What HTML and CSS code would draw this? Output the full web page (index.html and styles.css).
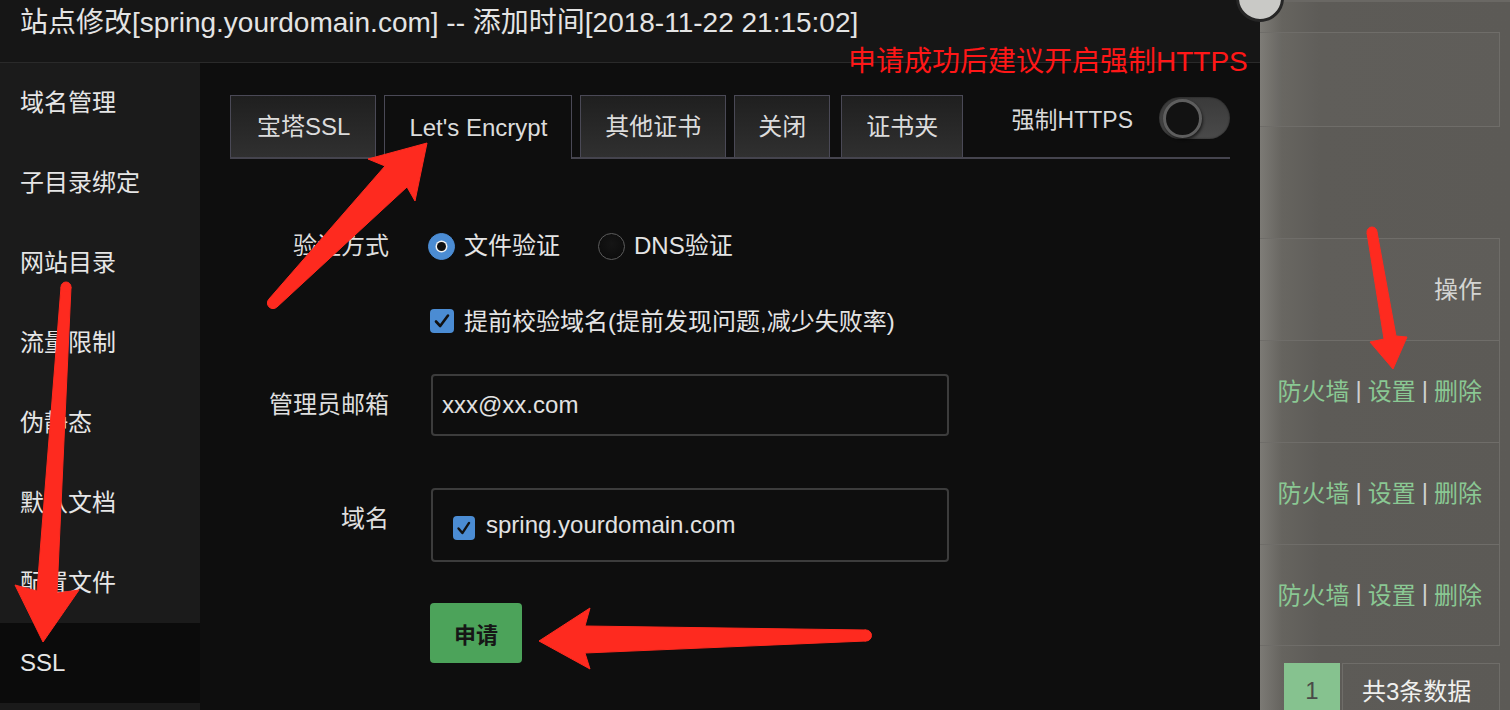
FILE: index.html
```html
<!DOCTYPE html>
<html lang="zh-CN">
<head>
<meta charset="utf-8">
<title>站点修改</title>
<link rel="stylesheet" href="styles.css">
</head>
<body>
<div class="page">
  <div class="dialog">
    <div class="titlebar">站点修改[spring.yourdomain.com] -- 添加时间[2018-11-22 21:15:02]</div>
    <div class="dialog-body">
      <div class="menu">
        <div class="menu-item">域名管理</div>
        <div class="menu-item">子目录绑定</div>
        <div class="menu-item">网站目录</div>
        <div class="menu-item">流量限制</div>
        <div class="menu-item">伪静态</div>
        <div class="menu-item">默认文档</div>
        <div class="menu-item">配置文件</div>
        <div class="menu-item active">SSL</div>
        <div class="menu-fill"></div>
      </div>
      <div class="content">
        <div class="tabbar">
          <div class="tab tab-first">宝塔SSL</div>
          <div class="tab active">Let's Encrypt</div>
          <div class="tab">其他证书</div>
          <div class="tab tab-narrow">关闭</div>
          <div class="tab">证书夹</div>
          <div class="force">
            <span class="force-label">强制HTTPS</span>
            <span class="switch"></span>
          </div>
        </div>
        <div class="form">
          <div class="row row-radio">
            <div class="label">验证方式</div>
            <label class="radio-opt"><span class="radio checked"></span>文件验证</label>
            <label class="radio-opt"><span class="radio"></span>DNS验证</label>
          </div>
          <div class="row row-check">
            <div class="label"></div>
            <label class="check-opt"><span class="checkbox"><svg viewBox="0 0 24 24" width="24" height="24"><path d="M6 12.5 L10.2 17 L18 6.5" fill="none" stroke="#111" stroke-width="2.6" stroke-linecap="round" stroke-linejoin="round"/></svg></span>提前校验域名(提前发现问题,减少失败率)</label>
          </div>
          <div class="row row-input row-email">
            <div class="label">管理员邮箱</div>
            <div class="input">xxx@xx.com</div>
          </div>
          <div class="row row-input row-domain">
            <div class="label">域名</div>
            <div class="input input-domain"><span class="checkbox small"><svg viewBox="0 0 24 24" width="22" height="22"><path d="M6 12.5 L10.2 17.5 L17.5 6.5" fill="none" stroke="#111" stroke-width="2.6" stroke-linecap="round" stroke-linejoin="round"/></svg></span>spring.yourdomain.com</div>
          </div>
          <div class="row row-btn">
            <div class="label"></div>
            <button class="btn">申请</button>
          </div>
        </div>
        <div class="annot">申请成功后建议开启强制HTTPS</div>
      </div>
    </div>
  </div>
  <div class="side">
    <div class="box box-top"></div>
    <div class="table">
      <div class="trow head">操作</div>
      <div class="trow ops"><span class="op">防火墙</span><span class="sep">|</span><span class="op">设置</span><span class="sep">|</span><span class="op">删除</span></div>
      <div class="trow ops"><span class="op">防火墙</span><span class="sep">|</span><span class="op">设置</span><span class="sep">|</span><span class="op">删除</span></div>
      <div class="trow ops last"><span class="op">防火墙</span><span class="sep">|</span><span class="op">设置</span><span class="sep">|</span><span class="op">删除</span></div>
    </div>
    <div class="pager">
      <span class="pg-cur">1</span>
      <span class="pg-total">共3条数据</span>
    </div>
  </div>
</div>
<div class="close-btn"></div>
<svg class="arrows" width="1510" height="710" viewBox="0 0 1510 710">
  <g fill="#fe2a1f" stroke="#fe2a1f" stroke-width="1" stroke-linejoin="round">
    <path d="M269 299 L385 166 L368 159 L427 143 L415 201 L407 187 L277 307 Z"/>
    <circle cx="273" cy="303" r="5.6"/>
    <path d="M61 287 L37 591 L15 585 L43 642 L79 590 L57 593 L71 287 Z"/>
    <circle cx="66" cy="287" r="5"/>
    <path d="M1367 233 L1384 339 L1370 342 L1393 369 L1407 337 L1396 336 L1377 232 Z"/>
    <circle cx="1372" cy="232" r="5"/>
    <path d="M539 641 L590 608 L585 626 L866 630 L866 641 L585 653 L590 669 Z"/>
    <circle cx="866" cy="635.5" r="5.5"/>
  </g>
</svg>
</body>
</html>
```

FILE: styles.css
```css
* { box-sizing: border-box; }

body {
  margin: 0;
  width: 1510px;
  height: 710px;
  overflow: hidden;
  position: relative;
  background: #0e0e0e;
  color: #e2e2e2;
  font-family: "Liberation Sans", "Noto Sans CJK SC", sans-serif;
}

.page {
  display: flex;
  height: 710px;
}

.dialog {
  width: 1260px;
  display: flex;
  flex-direction: column;
  background: #0e0e0e;
}

.titlebar {
  height: 63px;
  flex: none;
  background: #161616;
  border-bottom: 1px solid #2a2a2a;
  padding-left: 20px;
  font-size: 28px;
  line-height: 46px;
  color: #e4e4e4;
  white-space: nowrap;
}

.dialog-body {
  flex: 1;
  display: flex;
  min-height: 0;
}

.menu {
  width: 200px;
  flex: none;
  display: flex;
  flex-direction: column;
  background: #1b1b1b;
}

.menu-item {
  height: 80px;
  flex: none;
  line-height: 80px;
  padding-left: 20px;
  font-size: 24px;
  color: #e6e6e6;
}

.menu-item.active {
  background: #0b0b0b;
}

.menu-fill {
  flex: 1;
  background: #1a1a1a;
}

.content {
  flex: 1;
  position: relative;
  padding: 32px 30px 0 30px;
}

/* tabs */
.tabbar {
  display: flex;
  align-items: flex-end;
  height: 64px;
  border-bottom: 2px solid #45444e;
}

.tab {
  height: 62px;
  margin-right: 8px;
  padding: 0 24px;
  border: 1px solid #4a4956;
  border-bottom: none;
  background: linear-gradient(#1f1f1f, #303030);
  font-size: 24px;
  line-height: 62px;
  color: #dcdcdc;
  white-space: nowrap;
}

.tab.tab-first {
  padding: 0 25px 0 26px;
}

.tab.tab-narrow {
  padding: 0 23px;
  margin-right: 11px;
}

.tab.active {
  height: 64px;
  margin-bottom: -2px;
  background: #0e0e0e;
  line-height: 64px;
}

.force {
  margin-left: auto;
  align-self: flex-start;
  display: flex;
  align-items: center;
  height: 44px;
  margin-top: 1px;
}

.force-label {
  font-size: 23px;
  color: #dadada;
  margin-right: 26px;
}

.switch {
  width: 71px;
  height: 42px;
  border-radius: 21px;
  background: linear-gradient(#3a3a3a, #4a4a4a);
  display: flex;
  align-items: center;
  padding-left: 4px;
  box-shadow: 0 0 2px rgba(0,0,0,0.6) inset;
}

.switch::before {
  content: "";
  width: 33px;
  height: 33px;
  border-radius: 50%;
  background: #121212;
  border: 3px solid #5e5e5e;
  box-shadow: 1px 2px 3px rgba(0,0,0,0.6);
}

/* form */
.form {
  padding-top: 64px;
}

.row {
  display: flex;
  align-items: center;
}

.label {
  width: 159px;
  flex: none;
  margin-right: 39px;
  text-align: right;
  font-size: 24px;
  color: #dedede;
}

.row-radio {
  height: 40px;
}

.radio-opt,
.check-opt {
  display: flex;
  align-items: center;
  font-size: 24px;
  color: #e4e4e4;
  margin-right: 38px;
}

.radio {
  width: 27px;
  height: 27px;
  border-radius: 50%;
  margin-right: 9px;
  margin-top: 6px;
  background: radial-gradient(circle at 50% 40%, #151515, #0a0a0a);
  border: 1.5px solid #5c5c5c;
  display: flex;
  align-items: center;
  justify-content: center;
}

.radio.checked {
  background: #4b8cd3;
  border-color: #4b8cd3;
}

.radio.checked::after {
  content: "";
  width: 9px;
  height: 9px;
  border-radius: 50%;
  background: #111;
  box-shadow: 0 0 0 1.5px #f2f2f2;
}

.row-check {
  height: 40px;
  margin-top: 36px;
}

.check-opt {
  padding-left: 2px;
}

.checkbox {
  width: 24px;
  height: 24px;
  border-radius: 4px;
  background: #4b8cd3;
  margin-right: 10px;
  margin-top: 4px;
  display: flex;
  align-items: center;
  justify-content: center;
}

.checkbox.small {
  width: 22px;
  height: 24px;
  margin-right: 11px;
  margin-top: 6px;
}

.row-input {
  align-items: flex-start;
}

.row-input .label {
  line-height: 62px;
}

.input {
  width: 518px;
  margin-left: 3px;
  border: 2px solid #3c3c3c;
  border-radius: 4px;
  background: #0e0e0e;
  display: flex;
  align-items: center;
  font-size: 24px;
  color: #e2e2e2;
}

.row-email {
  margin-top: 35px;
}

.row-email .input {
  height: 62px;
  padding-left: 9px;
}

.row-domain {
  margin-top: 52px;
}

.input-domain {
  height: 74px;
  padding-left: 20px;
}

.row-btn {
  margin-top: 41px;
}

.btn {
  margin-left: 2px;
  width: 92px;
  height: 60px;
  border: none;
  border-radius: 4px;
  background: #4ca35a;
  color: #161616;
  font-family: "Liberation Sans", "Noto Sans CJK SC", sans-serif;
  font-size: 22px;
  font-weight: bold;
  padding: 0;
}

.annot {
  position: absolute;
  left: 648px;
  top: -19px;
  font-size: 28px;
  line-height: 36px;
  color: #ff1717;
  white-space: nowrap;
}

/* right side panel */
.side {
  width: 250px;
  flex: none;
  padding-top: 32px;
  background: linear-gradient(90deg, #7c7a75 0, #66645f 22px, #5d5b57 60px, #5c5a56 100%);
  border-top: 2px solid #6a6864;
}

.box {
  width: 240px;
  border: 1px solid #6f6d69;
  border-left: none;
}

.box-top {
  height: 95px;
  margin-top: -2px;
  background: rgba(255,255,255,0.02);
}

.table {
  margin-top: 111px;
  width: 240px;
}

.trow {
  height: 102px;
  border: 1px solid #6f6d69;
  border-left: none;
  border-bottom: none;
  display: flex;
  align-items: center;
  justify-content: flex-end;
  padding-right: 17px;
  padding-bottom: 4px;
  font-size: 24px;
  color: #d4d4d2;
}

.trow.head {
  background: rgba(255,255,255,0.025);
}

.trow.last {
  border-bottom: 1px solid #6f6d69;
}

.op {
  color: #8ac893;
}

.sep {
  color: #d0d0d0;
  margin: 0 6px;
}

.pager {
  display: flex;
  margin-top: 17px;
  margin-left: 24px;
}

.pg-cur {
  width: 56px;
  height: 52px;
  background: #86c28f;
  color: #4a4a48;
  font-size: 24px;
  line-height: 56px;
  text-align: center;
}

.pg-total {
  width: 158px;
  height: 52px;
  margin-left: 2px;
  border: 1px solid #6f6d69;
  border-bottom: none;
  padding-left: 19px;
  font-size: 24px;
  line-height: 56px;
  color: #f0f0ee;
}

.close-btn {
  position: absolute;
  left: 1236px;
  top: -26px;
  width: 48px;
  height: 48px;
  border-radius: 50%;
  background: #c9c9c6;
  border: 3px solid #262626;
}

.arrows {
  position: absolute;
  left: 0;
  top: 0;
  pointer-events: none;
}
```
